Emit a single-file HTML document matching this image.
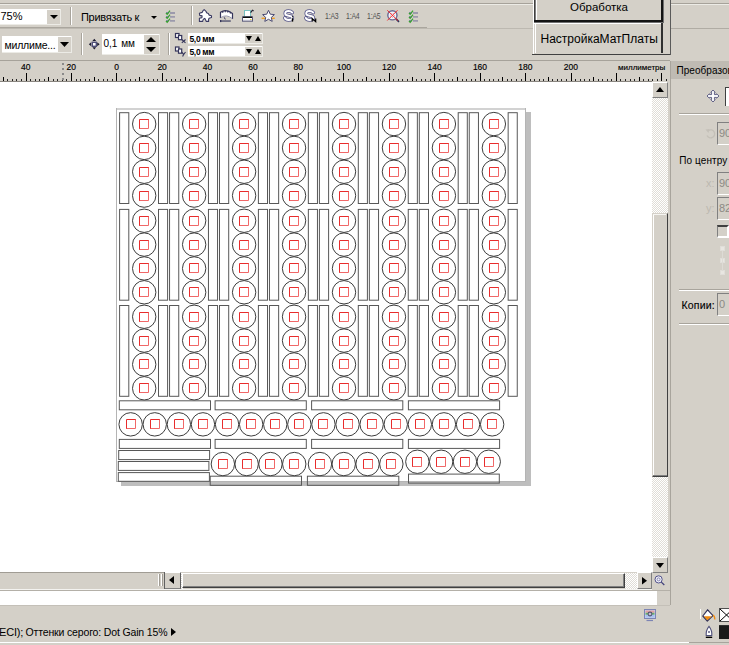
<!DOCTYPE html>
<html><head><meta charset="utf-8"><style>
*{box-sizing:border-box}
body{margin:0;width:729px;height:645px;overflow:hidden;background:#d4d0c8;position:relative;font-family:"Liberation Sans",sans-serif;color:#000}
.a{position:absolute}
.t{position:absolute;white-space:nowrap;line-height:1}
svg{position:absolute;overflow:visible}
</style></head><body>

<div class="a" style="left:0px;top:3px;width:729px;height:1px;background:#a6a29a"></div>
<div class="a" style="left:0px;top:4px;width:729px;height:1px;background:#ecebe6"></div>
<div class="a" style="left:0px;top:9px;width:61px;height:16px;background:#fff;border-bottom:1px solid #ecebe6;border-right:1px solid #ecebe6"></div>
<div class="a" style="left:47px;top:10px;width:13px;height:14px;background:#d4d0c8"></div>
<svg style="left:50px;top:15px" width="8" height="4"><path d="M0 0H8L4.0 4Z" fill="#000"/></svg>
<div class="t" style="left:0.5px;top:10.5px;font-size:11px;">75%</div>
<div class="a" style="left:70px;top:7px;width:1px;height:18px;background:#a8a49c"></div>
<div class="a" style="left:71px;top:7px;width:1px;height:18px;background:#fff"></div>
<div class="t" style="left:81px;top:12px;font-size:11px;letter-spacing:-0.3px">Привязать к</div>
<svg style="left:151px;top:16px" width="6" height="3"><path d="M0 0H6L3.0 3Z" fill="#000"/></svg>
<svg style="left:165px;top:10px" width="11" height="12"><path d="M5 3H10M5 6.9H10M5 10.8H10" stroke="#9c9aac" stroke-width="1.8"/><rect x="1" y="2" width="2.5" height="2" fill="#8a88b8"/><rect x="1" y="6" width="2.5" height="2" fill="#8a88b8"/><rect x="1" y="10" width="2.5" height="2" fill="#8a88b8"/><path d="M1 3L2.2 4.3 5 0.7M1 7L2.2 8.3 5 4.7M1 11L2.2 12.3 5 8.7" stroke="#38a030" stroke-width="1.3" fill="none"/></svg>
<div class="a" style="left:191px;top:6px;width:1px;height:19px;background:#a8a49c"></div>
<div class="a" style="left:192px;top:6px;width:1px;height:19px;background:#fff"></div>
<svg style="left:0px;top:0px" width="1" height="1"><path d="M204.2 9.6L206 11.3 206.6 12.7 208.3 13.5 209.1 15.1 211.5 15.7 211.5 17.5 209.1 18.3 208.6 19.3 208.6 21.4 206.3 21.4 204.9 18.6 204.4 18.4 203 19.8 202.7 21.4 199.4 21.4 199.4 18.3 201.9 17.6 202.1 15.9 199.7 15.4 199.4 13.2 202.1 12.4 203 10.7Z" fill="#fff" stroke="#3a3a62" stroke-width="1.1" stroke-linejoin="round"/></svg>
<svg style="left:0px;top:0px" width="1" height="1"><path d="M220.5 17.7V12.3Q226 8.6 232.5 13.4V18.9Q226.5 14 220.5 17.7Z" fill="#fff"/><path d="M220.5 18V12.3Q226 8.6 232.5 13.4V19" fill="none" stroke="#34345a" stroke-width="1.2" stroke-linejoin="round"/><path d="M220.8 17.6Q226.5 13.8 232.3 18.6" fill="none" stroke="#9a9ab0" stroke-width="1"/><path d="M222.8 11.2V13M225.3 10.3V12.3M227.8 10.6V12.6M230.3 11.7V13.6" stroke="#34345a" stroke-width="1"/><path d="M224.2 17.3L225.3 19.4" stroke="#34345a" stroke-width="1"/><rect x="220.2" y="20.2" width="10.6" height="1.7" fill="#6a6a80"/><rect x="220" y="20" width="1.3" height="2.1" fill="#34345a"/></svg>
<svg style="left:0px;top:0px" width="1" height="1"><rect x="244.5" y="10.5" width="6" height="6.2" fill="#fff" stroke="#78c0c0" stroke-width="1"/><path d="M250.6 12.6L252.5 10.2M252.2 10L253.6 11" stroke="#202030" stroke-width="1.1"/><rect x="242.5" y="16.8" width="10" height="4.4" fill="#fff" stroke="#5a5a7a" stroke-width="1"/><path d="M243 17.3H252" stroke="#000" stroke-width="1.3"/><path d="M243 20.3H252" stroke="#b8b8c8" stroke-width="1"/><rect x="250" y="19" width="1.5" height="1" fill="#e8d040"/></svg>
<svg style="left:0px;top:0px" width="1" height="1"><path d="M261.6 18.3H274.8" stroke="#f0a028" stroke-width="1.4"/><path d="M268.5 10.3L270.3 14.2 274.4 14.6 271.3 17.4 272.2 21.4 268.5 19.3 264.8 21.4 265.7 17.4 262.6 14.6 266.7 14.2Z" fill="#fafafa" stroke="#4a4a72" stroke-width="1" stroke-linejoin="round"/></svg>
<svg style="left:0px;top:0px" width="1" height="1"><path d="M292.3 12.6Q291.0 11 288.6 11Q285.2 11 285.2 13.4Q285.2 15.3 288.8 15.7Q292.4 16.1 292.4 18.1Q292.4 20 288.6 20Q285.6 20 284.8 17.9" fill="none" stroke="#56568a" stroke-width="3.5" stroke-linecap="round"/><path d="M292.3 12.6Q291.0 11 288.6 11Q285.2 11 285.2 13.4Q285.2 15.3 288.8 15.7Q292.4 16.1 292.4 18.1Q292.4 20 288.6 20Q285.6 20 284.8 17.9" fill="none" stroke="#fff" stroke-width="1.9" stroke-linecap="round"/><rect x="291.8" y="18.2" width="1.4" height="3.4" fill="#000"/><rect x="292" y="16.2" width="1.1" height="1.1" fill="#000"/></svg>
<svg style="left:0px;top:0px" width="1" height="1"><path d="M313.3 12.6Q312.0 11 309.6 11Q306.2 11 306.2 13.4Q306.2 15.3 309.8 15.7Q313.4 16.1 313.4 18.1Q313.4 20 309.6 20Q306.6 20 305.8 17.9" fill="none" stroke="#56568a" stroke-width="3.5" stroke-linecap="round"/><path d="M313.3 12.6Q312.0 11 309.6 11Q306.2 11 306.2 13.4Q306.2 15.3 309.8 15.7Q313.4 16.1 313.4 18.1Q313.4 20 309.6 20Q306.6 20 305.8 17.9" fill="none" stroke="#fff" stroke-width="1.9" stroke-linecap="round"/><path d="M312.2 21.6V18.5L315.7 21.6V18.5" stroke="#000" stroke-width="1.2" fill="none"/></svg>
<div class="t" style="left:324.5px;top:12.3px;font-size:8.6px;color:#505050;letter-spacing:-0.2px;transform:scaleX(0.8);transform-origin:0 0">1:A3</div>
<div class="t" style="left:345.5px;top:12.3px;font-size:8.6px;color:#505050;letter-spacing:-0.2px;transform:scaleX(0.8);transform-origin:0 0">1:A4</div>
<div class="t" style="left:366.5px;top:12.3px;font-size:8.6px;color:#505050;letter-spacing:-0.2px;transform:scaleX(0.8);transform-origin:0 0">1:A5</div>
<svg style="left:0px;top:0px" width="1" height="1"><circle cx="392.4" cy="15.3" r="4.6" fill="#f4f4fa" stroke="#6a6a92" stroke-width="1.4"/><circle cx="392.4" cy="15.3" r="2" fill="none" stroke="#9090a8" stroke-width="0.8" stroke-dasharray="1 1.2"/><path d="M396 18.9L399 21.9" stroke="#30305a" stroke-width="1.6"/><path d="M387.3 10.3L397.8 20.5M397.5 10.3L387.3 20.5" stroke="#ff1a1a" stroke-width="0.9"/></svg>
<svg style="left:408px;top:10px" width="11" height="12"><path d="M5 3H10M5 6.9H10M5 10.8H10" stroke="#9c9aac" stroke-width="1.8"/><rect x="1" y="2" width="2.5" height="2" fill="#8a88b8"/><rect x="1" y="6" width="2.5" height="2" fill="#8a88b8"/><rect x="1" y="10" width="2.5" height="2" fill="#8a88b8"/><path d="M1 3L2.2 4.3 5 0.7M1 7L2.2 8.3 5 4.7M1 11L2.2 12.3 5 8.7" stroke="#38a030" stroke-width="1.3" fill="none"/></svg>
<div class="a" style="left:0px;top:27px;width:427px;height:1px;background:#aaa69e"></div>
<div class="a" style="left:0px;top:28px;width:533px;height:1px;background:#bdb9b1"></div>
<div class="a" style="left:671px;top:3px;width:58px;height:1px;background:#a6a29a"></div>
<div class="a" style="left:671px;top:28px;width:58px;height:1px;background:#b0aca4"></div>
<div class="a" style="left:2px;top:36px;width:70px;height:17px;background:#fff;border-bottom:1px solid #ecebe6;border-right:1px solid #ecebe6"></div>
<div class="a" style="left:58px;top:37px;width:13px;height:15px;background:#d4d0c8"></div>
<svg style="left:60px;top:42px" width="9" height="5"><path d="M0 0H9L4.5 5Z" fill="#000"/></svg>
<div class="t" style="left:4.5px;top:39.8px;font-size:10.5px;letter-spacing:-0.2px">миллиме...</div>
<div class="a" style="left:81px;top:33px;width:1px;height:22px;background:#a8a49c"></div>
<div class="a" style="left:82px;top:33px;width:1px;height:22px;background:#fff"></div>
<svg style="left:0px;top:0px" width="1" height="1"><path d="M94.3 38.8L96.2 41H92.4Z M94.3 49.5L96.2 47.3H92.4Z M88.8 44.2L91.2 42.2V46.2Z M99.6 44.2L97.2 42.2V46.2Z" fill="#1a1a30"/><rect x="92.3" y="42.3" width="4" height="4" fill="#fff" stroke="#50507a" stroke-width="1.4"/></svg>
<div class="a" style="left:102px;top:34px;width:58px;height:21px;background:#fff;border-bottom:1px solid #ecebe6;border-right:1px solid #ecebe6"></div>
<div class="a" style="left:144px;top:35px;width:15px;height:19px;background:#d4d0c8"></div>
<svg style="left:146px;top:37px" width="10" height="5"><path d="M0 5H10L5.0 0Z" fill="#000"/></svg>
<svg style="left:146px;top:47px" width="10" height="5"><path d="M0 0H10L5.0 5Z" fill="#000"/></svg>
<div class="t" style="left:103.5px;top:38.5px;font-size:10px;letter-spacing:-0.1px;word-spacing:1.5px">0,1 мм</div>
<div class="a" style="left:168px;top:33px;width:1px;height:22px;background:#a8a49c"></div>
<div class="a" style="left:169px;top:33px;width:1px;height:22px;background:#fff"></div>
<svg style="left:0px;top:0px" width="1" height="1"><rect x="175.5" y="33.5" width="3.5" height="4" fill="#fff" stroke="#34345a" stroke-width="1.2"/><rect x="178.5" y="35.5" width="3.2" height="4.2" fill="#fff" stroke="#34345a" stroke-width="1.2"/><path d="M181.8 39.5L185.5 42.8M185.5 39.5L181.8 42.8" stroke="#34345a" stroke-width="1.1"/></svg>
<svg style="left:0px;top:0px" width="1" height="1"><rect x="175.5" y="47.0" width="3.5" height="4" fill="#fff" stroke="#34345a" stroke-width="1.2"/><rect x="178.5" y="49.0" width="3.2" height="4.2" fill="#fff" stroke="#34345a" stroke-width="1.2"/><path d="M181.8 52L183.6 54.5 185.5 52M183.6 54.5L182.6 56.5" stroke="#34345a" stroke-width="1.1" fill="none"/></svg>
<div class="a" style="left:188px;top:33px;width:75px;height:11px;background:#fff;border-bottom:1px solid #ecebe6;border-right:1px solid #ecebe6"></div>
<div class="a" style="left:245px;top:34px;width:17px;height:9px;background:#d4d0c8"></div>
<svg style="left:246px;top:36px" width="6" height="5"><path d="M0 0H6L3.0 5Z" fill="#000"/></svg>
<svg style="left:255px;top:36px" width="6" height="5"><path d="M0 5H6L3.0 0Z" fill="#000"/></svg>
<div class="t" style="left:189.4px;top:34.5px;font-size:8.5px;font-weight:bold;letter-spacing:-0.3px">5,0 мм</div>
<div class="a" style="left:188px;top:46px;width:75px;height:11px;background:#fff;border-bottom:1px solid #ecebe6;border-right:1px solid #ecebe6"></div>
<div class="a" style="left:245px;top:47px;width:17px;height:9px;background:#d4d0c8"></div>
<svg style="left:246px;top:49px" width="6" height="5"><path d="M0 0H6L3.0 5Z" fill="#000"/></svg>
<svg style="left:255px;top:49px" width="6" height="5"><path d="M0 5H6L3.0 0Z" fill="#000"/></svg>
<div class="t" style="left:189.4px;top:47.5px;font-size:8.5px;font-weight:bold;letter-spacing:-0.3px">5,0 мм</div>
<div class="a" style="left:0px;top:60px;width:670px;height:1px;background:#a6a29a"></div>
<div class="a" style="left:533px;top:0px;width:138px;height:55px;background:#d4d0c8"></div>
<div class="a" style="left:533px;top:0px;width:1px;height:54px;background:#fff"></div>
<div class="a" style="left:532px;top:54px;width:139px;height:1px;background:#404040"></div>
<div class="a" style="left:670px;top:0px;width:1px;height:55px;background:#5a5a5a"></div>
<div class="a" style="left:534px;top:0px;width:1px;height:20px;background:#404040"></div>
<div class="a" style="left:535px;top:0px;width:1px;height:20px;background:#808080"></div>
<div class="a" style="left:536px;top:0px;width:1px;height:20px;background:#fff"></div>
<div class="a" style="left:534px;top:20px;width:130px;height:2px;background:#141414"></div>
<div class="a" style="left:534px;top:22px;width:130px;height:1px;background:#707070"></div>
<div class="a" style="left:661px;top:0px;width:2px;height:22px;background:#141414"></div>
<div class="a" style="left:663px;top:0px;width:1px;height:22px;background:#707070"></div>
<div class="t" style="left:570px;top:1.5px;font-size:11.5px;">Обработка</div>
<div class="a" style="left:534px;top:23px;width:127px;height:1px;background:#fff"></div>
<div class="a" style="left:535px;top:23px;width:1px;height:30px;background:#fff"></div>
<div class="a" style="left:661px;top:23px;width:2px;height:30px;background:#303030"></div>
<div class="t" style="left:540.5px;top:32.5px;font-size:12px;">НастройкаМатПлаты</div>
<svg style="left:0px;top:0px" width="670" height="82" shape-rendering="crispEdges"><rect x="3" y="77" width="1" height="4" fill="#000"/><rect x="7" y="79" width="1" height="2" fill="#222"/><rect x="12" y="79" width="1" height="2" fill="#222"/><rect x="16" y="79" width="1" height="2" fill="#222"/><rect x="21" y="79" width="1" height="2" fill="#222"/><rect x="26" y="73" width="1" height="8" fill="#000"/><rect x="30" y="79" width="1" height="2" fill="#222"/><rect x="35" y="79" width="1" height="2" fill="#222"/><rect x="39" y="79" width="1" height="2" fill="#222"/><rect x="44" y="79" width="1" height="2" fill="#222"/><rect x="48" y="77" width="1" height="4" fill="#000"/><rect x="53" y="79" width="1" height="2" fill="#222"/><rect x="57" y="79" width="1" height="2" fill="#222"/><rect x="62" y="79" width="1" height="2" fill="#222"/><rect x="66" y="79" width="1" height="2" fill="#222"/><rect x="71" y="73" width="1" height="8" fill="#000"/><rect x="76" y="79" width="1" height="2" fill="#222"/><rect x="80" y="79" width="1" height="2" fill="#222"/><rect x="85" y="79" width="1" height="2" fill="#222"/><rect x="89" y="79" width="1" height="2" fill="#222"/><rect x="94" y="77" width="1" height="4" fill="#000"/><rect x="98" y="79" width="1" height="2" fill="#222"/><rect x="103" y="79" width="1" height="2" fill="#222"/><rect x="107" y="79" width="1" height="2" fill="#222"/><rect x="112" y="79" width="1" height="2" fill="#222"/><rect x="116" y="73" width="1" height="8" fill="#000"/><rect x="121" y="79" width="1" height="2" fill="#222"/><rect x="125" y="79" width="1" height="2" fill="#222"/><rect x="130" y="79" width="1" height="2" fill="#222"/><rect x="135" y="79" width="1" height="2" fill="#222"/><rect x="139" y="77" width="1" height="4" fill="#000"/><rect x="144" y="79" width="1" height="2" fill="#222"/><rect x="148" y="79" width="1" height="2" fill="#222"/><rect x="153" y="79" width="1" height="2" fill="#222"/><rect x="157" y="79" width="1" height="2" fill="#222"/><rect x="162" y="73" width="1" height="8" fill="#000"/><rect x="166" y="79" width="1" height="2" fill="#222"/><rect x="171" y="79" width="1" height="2" fill="#222"/><rect x="175" y="79" width="1" height="2" fill="#222"/><rect x="180" y="79" width="1" height="2" fill="#222"/><rect x="185" y="77" width="1" height="4" fill="#000"/><rect x="189" y="79" width="1" height="2" fill="#222"/><rect x="194" y="79" width="1" height="2" fill="#222"/><rect x="198" y="79" width="1" height="2" fill="#222"/><rect x="203" y="79" width="1" height="2" fill="#222"/><rect x="207" y="73" width="1" height="8" fill="#000"/><rect x="212" y="79" width="1" height="2" fill="#222"/><rect x="216" y="79" width="1" height="2" fill="#222"/><rect x="221" y="79" width="1" height="2" fill="#222"/><rect x="225" y="79" width="1" height="2" fill="#222"/><rect x="230" y="77" width="1" height="4" fill="#000"/><rect x="234" y="79" width="1" height="2" fill="#222"/><rect x="239" y="79" width="1" height="2" fill="#222"/><rect x="244" y="79" width="1" height="2" fill="#222"/><rect x="248" y="79" width="1" height="2" fill="#222"/><rect x="253" y="73" width="1" height="8" fill="#000"/><rect x="257" y="79" width="1" height="2" fill="#222"/><rect x="262" y="79" width="1" height="2" fill="#222"/><rect x="266" y="79" width="1" height="2" fill="#222"/><rect x="271" y="79" width="1" height="2" fill="#222"/><rect x="275" y="77" width="1" height="4" fill="#000"/><rect x="280" y="79" width="1" height="2" fill="#222"/><rect x="284" y="79" width="1" height="2" fill="#222"/><rect x="289" y="79" width="1" height="2" fill="#222"/><rect x="294" y="79" width="1" height="2" fill="#222"/><rect x="298" y="73" width="1" height="8" fill="#000"/><rect x="303" y="79" width="1" height="2" fill="#222"/><rect x="307" y="79" width="1" height="2" fill="#222"/><rect x="312" y="79" width="1" height="2" fill="#222"/><rect x="316" y="79" width="1" height="2" fill="#222"/><rect x="321" y="77" width="1" height="4" fill="#000"/><rect x="325" y="79" width="1" height="2" fill="#222"/><rect x="330" y="79" width="1" height="2" fill="#222"/><rect x="334" y="79" width="1" height="2" fill="#222"/><rect x="339" y="79" width="1" height="2" fill="#222"/><rect x="343" y="73" width="1" height="8" fill="#000"/><rect x="348" y="79" width="1" height="2" fill="#222"/><rect x="353" y="79" width="1" height="2" fill="#222"/><rect x="357" y="79" width="1" height="2" fill="#222"/><rect x="362" y="79" width="1" height="2" fill="#222"/><rect x="366" y="77" width="1" height="4" fill="#000"/><rect x="371" y="79" width="1" height="2" fill="#222"/><rect x="375" y="79" width="1" height="2" fill="#222"/><rect x="380" y="79" width="1" height="2" fill="#222"/><rect x="384" y="79" width="1" height="2" fill="#222"/><rect x="389" y="73" width="1" height="8" fill="#000"/><rect x="393" y="79" width="1" height="2" fill="#222"/><rect x="398" y="79" width="1" height="2" fill="#222"/><rect x="402" y="79" width="1" height="2" fill="#222"/><rect x="407" y="79" width="1" height="2" fill="#222"/><rect x="412" y="77" width="1" height="4" fill="#000"/><rect x="416" y="79" width="1" height="2" fill="#222"/><rect x="421" y="79" width="1" height="2" fill="#222"/><rect x="425" y="79" width="1" height="2" fill="#222"/><rect x="430" y="79" width="1" height="2" fill="#222"/><rect x="434" y="73" width="1" height="8" fill="#000"/><rect x="439" y="79" width="1" height="2" fill="#222"/><rect x="443" y="79" width="1" height="2" fill="#222"/><rect x="448" y="79" width="1" height="2" fill="#222"/><rect x="452" y="79" width="1" height="2" fill="#222"/><rect x="457" y="77" width="1" height="4" fill="#000"/><rect x="462" y="79" width="1" height="2" fill="#222"/><rect x="466" y="79" width="1" height="2" fill="#222"/><rect x="471" y="79" width="1" height="2" fill="#222"/><rect x="475" y="79" width="1" height="2" fill="#222"/><rect x="480" y="73" width="1" height="8" fill="#000"/><rect x="484" y="79" width="1" height="2" fill="#222"/><rect x="489" y="79" width="1" height="2" fill="#222"/><rect x="493" y="79" width="1" height="2" fill="#222"/><rect x="498" y="79" width="1" height="2" fill="#222"/><rect x="502" y="77" width="1" height="4" fill="#000"/><rect x="507" y="79" width="1" height="2" fill="#222"/><rect x="511" y="79" width="1" height="2" fill="#222"/><rect x="516" y="79" width="1" height="2" fill="#222"/><rect x="521" y="79" width="1" height="2" fill="#222"/><rect x="525" y="73" width="1" height="8" fill="#000"/><rect x="530" y="79" width="1" height="2" fill="#222"/><rect x="534" y="79" width="1" height="2" fill="#222"/><rect x="539" y="79" width="1" height="2" fill="#222"/><rect x="543" y="79" width="1" height="2" fill="#222"/><rect x="548" y="77" width="1" height="4" fill="#000"/><rect x="552" y="79" width="1" height="2" fill="#222"/><rect x="557" y="79" width="1" height="2" fill="#222"/><rect x="561" y="79" width="1" height="2" fill="#222"/><rect x="566" y="79" width="1" height="2" fill="#222"/><rect x="571" y="73" width="1" height="8" fill="#000"/><rect x="575" y="79" width="1" height="2" fill="#222"/><rect x="580" y="79" width="1" height="2" fill="#222"/><rect x="584" y="79" width="1" height="2" fill="#222"/><rect x="589" y="79" width="1" height="2" fill="#222"/><rect x="593" y="77" width="1" height="4" fill="#000"/><rect x="598" y="79" width="1" height="2" fill="#222"/><rect x="602" y="79" width="1" height="2" fill="#222"/><rect x="607" y="79" width="1" height="2" fill="#222"/><rect x="611" y="79" width="1" height="2" fill="#222"/><rect x="616" y="73" width="1" height="8" fill="#000"/><rect x="620" y="79" width="1" height="2" fill="#222"/><rect x="625" y="79" width="1" height="2" fill="#222"/><rect x="630" y="79" width="1" height="2" fill="#222"/><rect x="634" y="79" width="1" height="2" fill="#222"/><rect x="639" y="77" width="1" height="4" fill="#000"/><rect x="643" y="79" width="1" height="2" fill="#222"/><rect x="648" y="79" width="1" height="2" fill="#222"/><rect x="652" y="79" width="1" height="2" fill="#222"/><rect x="657" y="79" width="1" height="2" fill="#222"/><rect x="661" y="73" width="1" height="8" fill="#000"/><rect x="666" y="79" width="1" height="2" fill="#222"/><rect x="62" y="63" width="2" height="2" fill="#8a8a8a"/><rect x="62" y="68" width="2" height="2" fill="#8a8a8a"/><rect x="62" y="73" width="2" height="2" fill="#8a8a8a"/><rect x="62" y="78" width="2" height="2" fill="#8a8a8a"/></svg>
<div class="t" style="left:21.1px;top:63px;font-size:8.5px;color:#000;-webkit-text-stroke:0.15px #000">40</div>
<div class="t" style="left:66.6px;top:63px;font-size:8.5px;color:#000;-webkit-text-stroke:0.15px #000">20</div>
<div class="t" style="left:114.3px;top:63px;font-size:8.5px;color:#000;-webkit-text-stroke:0.15px #000">0</div>
<div class="t" style="left:157.4px;top:63px;font-size:8.5px;color:#000;-webkit-text-stroke:0.15px #000">20</div>
<div class="t" style="left:202.8px;top:63px;font-size:8.5px;color:#000;-webkit-text-stroke:0.15px #000">40</div>
<div class="t" style="left:248.2px;top:63px;font-size:8.5px;color:#000;-webkit-text-stroke:0.15px #000">60</div>
<div class="t" style="left:293.6px;top:63px;font-size:8.5px;color:#000;-webkit-text-stroke:0.15px #000">80</div>
<div class="t" style="left:336.7px;top:63px;font-size:8.5px;color:#000;-webkit-text-stroke:0.15px #000">100</div>
<div class="t" style="left:382.1px;top:63px;font-size:8.5px;color:#000;-webkit-text-stroke:0.15px #000">120</div>
<div class="t" style="left:427.5px;top:63px;font-size:8.5px;color:#000;-webkit-text-stroke:0.15px #000">140</div>
<div class="t" style="left:472.9px;top:63px;font-size:8.5px;color:#000;-webkit-text-stroke:0.15px #000">160</div>
<div class="t" style="left:518.3px;top:63px;font-size:8.5px;color:#000;-webkit-text-stroke:0.15px #000">180</div>
<div class="t" style="left:563.7px;top:63px;font-size:8.5px;color:#000;-webkit-text-stroke:0.15px #000">200</div>
<div class="t" style="left:618px;top:63.5px;font-size:8px;color:#000;-webkit-text-stroke:0.15px #000">миллиметры</div>
<div class="a" style="left:0px;top:81px;width:652px;height:1px;background:#8a8680"></div>
<div class="a" style="left:0px;top:82px;width:652px;height:490px;background:#fff"></div>
<svg style="left:0px;top:0px" width="652" height="572"><rect x="526" y="112" width="5" height="374" fill="#bebebe"/><rect x="121" y="482" width="410" height="4" fill="#bebebe"/><rect x="116" y="108" width="410" height="2" fill="#d2d2d2"/><rect x="116" y="108" width="1" height="374" fill="#b4b4b4"/><rect x="525" y="108" width="1" height="374" fill="#b4b4b4"/><rect x="116" y="481" width="410" height="1" fill="#b4b4b4"/><rect x="119.60" y="112.70" width="9.20" height="90.80" stroke="#585858" stroke-width="1" fill="none"/><rect x="158.50" y="112.70" width="9.10" height="90.80" stroke="#585858" stroke-width="1" fill="none"/><circle cx="144.20" cy="124.05" r="11.7" stroke="#3c3c3c" stroke-width="1.0" fill="none"/><path d="M139.5 129.0V119.5H149.0" stroke="#e82c2c" stroke-width="1" fill="none"/><path d="M148.5 119.5V128.5H139.5" stroke="#f06868" stroke-width="1" fill="none"/><circle cx="144.20" cy="147.90" r="11.7" stroke="#3c3c3c" stroke-width="1.0" fill="none"/><path d="M139.5 153.0V143.5H149.0" stroke="#e82c2c" stroke-width="1" fill="none"/><path d="M148.5 143.5V152.5H139.5" stroke="#f06868" stroke-width="1" fill="none"/><circle cx="144.20" cy="171.75" r="11.7" stroke="#3c3c3c" stroke-width="1.0" fill="none"/><path d="M139.5 177.0V167.5H149.0" stroke="#e82c2c" stroke-width="1" fill="none"/><path d="M148.5 167.5V176.5H139.5" stroke="#f06868" stroke-width="1" fill="none"/><circle cx="144.20" cy="195.60" r="11.7" stroke="#3c3c3c" stroke-width="1.0" fill="none"/><path d="M139.5 201.0V191.5H149.0" stroke="#e82c2c" stroke-width="1" fill="none"/><path d="M148.5 191.5V200.5H139.5" stroke="#f06868" stroke-width="1" fill="none"/><rect x="169.55" y="112.70" width="9.20" height="90.80" stroke="#585858" stroke-width="1" fill="none"/><rect x="208.45" y="112.70" width="9.10" height="90.80" stroke="#585858" stroke-width="1" fill="none"/><circle cx="194.15" cy="124.05" r="11.7" stroke="#3c3c3c" stroke-width="1.0" fill="none"/><path d="M189.5 129.0V119.5H199.0" stroke="#e82c2c" stroke-width="1" fill="none"/><path d="M198.5 119.5V128.5H189.5" stroke="#f06868" stroke-width="1" fill="none"/><circle cx="194.15" cy="147.90" r="11.7" stroke="#3c3c3c" stroke-width="1.0" fill="none"/><path d="M189.5 153.0V143.5H199.0" stroke="#e82c2c" stroke-width="1" fill="none"/><path d="M198.5 143.5V152.5H189.5" stroke="#f06868" stroke-width="1" fill="none"/><circle cx="194.15" cy="171.75" r="11.7" stroke="#3c3c3c" stroke-width="1.0" fill="none"/><path d="M189.5 177.0V167.5H199.0" stroke="#e82c2c" stroke-width="1" fill="none"/><path d="M198.5 167.5V176.5H189.5" stroke="#f06868" stroke-width="1" fill="none"/><circle cx="194.15" cy="195.60" r="11.7" stroke="#3c3c3c" stroke-width="1.0" fill="none"/><path d="M189.5 201.0V191.5H199.0" stroke="#e82c2c" stroke-width="1" fill="none"/><path d="M198.5 191.5V200.5H189.5" stroke="#f06868" stroke-width="1" fill="none"/><rect x="219.50" y="112.70" width="9.20" height="90.80" stroke="#585858" stroke-width="1" fill="none"/><rect x="258.40" y="112.70" width="9.10" height="90.80" stroke="#585858" stroke-width="1" fill="none"/><circle cx="244.10" cy="124.05" r="11.7" stroke="#3c3c3c" stroke-width="1.0" fill="none"/><path d="M239.5 129.0V119.5H249.0" stroke="#e82c2c" stroke-width="1" fill="none"/><path d="M248.5 119.5V128.5H239.5" stroke="#f06868" stroke-width="1" fill="none"/><circle cx="244.10" cy="147.90" r="11.7" stroke="#3c3c3c" stroke-width="1.0" fill="none"/><path d="M239.5 153.0V143.5H249.0" stroke="#e82c2c" stroke-width="1" fill="none"/><path d="M248.5 143.5V152.5H239.5" stroke="#f06868" stroke-width="1" fill="none"/><circle cx="244.10" cy="171.75" r="11.7" stroke="#3c3c3c" stroke-width="1.0" fill="none"/><path d="M239.5 177.0V167.5H249.0" stroke="#e82c2c" stroke-width="1" fill="none"/><path d="M248.5 167.5V176.5H239.5" stroke="#f06868" stroke-width="1" fill="none"/><circle cx="244.10" cy="195.60" r="11.7" stroke="#3c3c3c" stroke-width="1.0" fill="none"/><path d="M239.5 201.0V191.5H249.0" stroke="#e82c2c" stroke-width="1" fill="none"/><path d="M248.5 191.5V200.5H239.5" stroke="#f06868" stroke-width="1" fill="none"/><rect x="269.45" y="112.70" width="9.20" height="90.80" stroke="#585858" stroke-width="1" fill="none"/><rect x="308.35" y="112.70" width="9.10" height="90.80" stroke="#585858" stroke-width="1" fill="none"/><circle cx="294.05" cy="124.05" r="11.7" stroke="#3c3c3c" stroke-width="1.0" fill="none"/><path d="M289.5 129.0V119.5H299.0" stroke="#e82c2c" stroke-width="1" fill="none"/><path d="M298.5 119.5V128.5H289.5" stroke="#f06868" stroke-width="1" fill="none"/><circle cx="294.05" cy="147.90" r="11.7" stroke="#3c3c3c" stroke-width="1.0" fill="none"/><path d="M289.5 153.0V143.5H299.0" stroke="#e82c2c" stroke-width="1" fill="none"/><path d="M298.5 143.5V152.5H289.5" stroke="#f06868" stroke-width="1" fill="none"/><circle cx="294.05" cy="171.75" r="11.7" stroke="#3c3c3c" stroke-width="1.0" fill="none"/><path d="M289.5 177.0V167.5H299.0" stroke="#e82c2c" stroke-width="1" fill="none"/><path d="M298.5 167.5V176.5H289.5" stroke="#f06868" stroke-width="1" fill="none"/><circle cx="294.05" cy="195.60" r="11.7" stroke="#3c3c3c" stroke-width="1.0" fill="none"/><path d="M289.5 201.0V191.5H299.0" stroke="#e82c2c" stroke-width="1" fill="none"/><path d="M298.5 191.5V200.5H289.5" stroke="#f06868" stroke-width="1" fill="none"/><rect x="319.40" y="112.70" width="9.20" height="90.80" stroke="#585858" stroke-width="1" fill="none"/><rect x="358.30" y="112.70" width="9.10" height="90.80" stroke="#585858" stroke-width="1" fill="none"/><circle cx="344.00" cy="124.05" r="11.7" stroke="#3c3c3c" stroke-width="1.0" fill="none"/><path d="M339.5 129.0V119.5H349.0" stroke="#e82c2c" stroke-width="1" fill="none"/><path d="M348.5 119.5V128.5H339.5" stroke="#f06868" stroke-width="1" fill="none"/><circle cx="344.00" cy="147.90" r="11.7" stroke="#3c3c3c" stroke-width="1.0" fill="none"/><path d="M339.5 153.0V143.5H349.0" stroke="#e82c2c" stroke-width="1" fill="none"/><path d="M348.5 143.5V152.5H339.5" stroke="#f06868" stroke-width="1" fill="none"/><circle cx="344.00" cy="171.75" r="11.7" stroke="#3c3c3c" stroke-width="1.0" fill="none"/><path d="M339.5 177.0V167.5H349.0" stroke="#e82c2c" stroke-width="1" fill="none"/><path d="M348.5 167.5V176.5H339.5" stroke="#f06868" stroke-width="1" fill="none"/><circle cx="344.00" cy="195.60" r="11.7" stroke="#3c3c3c" stroke-width="1.0" fill="none"/><path d="M339.5 201.0V191.5H349.0" stroke="#e82c2c" stroke-width="1" fill="none"/><path d="M348.5 191.5V200.5H339.5" stroke="#f06868" stroke-width="1" fill="none"/><rect x="369.35" y="112.70" width="9.20" height="90.80" stroke="#585858" stroke-width="1" fill="none"/><rect x="408.25" y="112.70" width="9.10" height="90.80" stroke="#585858" stroke-width="1" fill="none"/><circle cx="393.95" cy="124.05" r="11.7" stroke="#3c3c3c" stroke-width="1.0" fill="none"/><path d="M389.5 129.0V119.5H399.0" stroke="#e82c2c" stroke-width="1" fill="none"/><path d="M398.5 119.5V128.5H389.5" stroke="#f06868" stroke-width="1" fill="none"/><circle cx="393.95" cy="147.90" r="11.7" stroke="#3c3c3c" stroke-width="1.0" fill="none"/><path d="M389.5 153.0V143.5H399.0" stroke="#e82c2c" stroke-width="1" fill="none"/><path d="M398.5 143.5V152.5H389.5" stroke="#f06868" stroke-width="1" fill="none"/><circle cx="393.95" cy="171.75" r="11.7" stroke="#3c3c3c" stroke-width="1.0" fill="none"/><path d="M389.5 177.0V167.5H399.0" stroke="#e82c2c" stroke-width="1" fill="none"/><path d="M398.5 167.5V176.5H389.5" stroke="#f06868" stroke-width="1" fill="none"/><circle cx="393.95" cy="195.60" r="11.7" stroke="#3c3c3c" stroke-width="1.0" fill="none"/><path d="M389.5 201.0V191.5H399.0" stroke="#e82c2c" stroke-width="1" fill="none"/><path d="M398.5 191.5V200.5H389.5" stroke="#f06868" stroke-width="1" fill="none"/><rect x="419.30" y="112.70" width="9.20" height="90.80" stroke="#585858" stroke-width="1" fill="none"/><rect x="458.20" y="112.70" width="9.10" height="90.80" stroke="#585858" stroke-width="1" fill="none"/><circle cx="443.90" cy="124.05" r="11.7" stroke="#3c3c3c" stroke-width="1.0" fill="none"/><path d="M439.5 129.0V119.5H449.0" stroke="#e82c2c" stroke-width="1" fill="none"/><path d="M448.5 119.5V128.5H439.5" stroke="#f06868" stroke-width="1" fill="none"/><circle cx="443.90" cy="147.90" r="11.7" stroke="#3c3c3c" stroke-width="1.0" fill="none"/><path d="M439.5 153.0V143.5H449.0" stroke="#e82c2c" stroke-width="1" fill="none"/><path d="M448.5 143.5V152.5H439.5" stroke="#f06868" stroke-width="1" fill="none"/><circle cx="443.90" cy="171.75" r="11.7" stroke="#3c3c3c" stroke-width="1.0" fill="none"/><path d="M439.5 177.0V167.5H449.0" stroke="#e82c2c" stroke-width="1" fill="none"/><path d="M448.5 167.5V176.5H439.5" stroke="#f06868" stroke-width="1" fill="none"/><circle cx="443.90" cy="195.60" r="11.7" stroke="#3c3c3c" stroke-width="1.0" fill="none"/><path d="M439.5 201.0V191.5H449.0" stroke="#e82c2c" stroke-width="1" fill="none"/><path d="M448.5 191.5V200.5H439.5" stroke="#f06868" stroke-width="1" fill="none"/><rect x="469.25" y="112.70" width="9.20" height="90.80" stroke="#585858" stroke-width="1" fill="none"/><rect x="508.15" y="112.70" width="9.10" height="90.80" stroke="#585858" stroke-width="1" fill="none"/><circle cx="493.85" cy="124.05" r="11.7" stroke="#3c3c3c" stroke-width="1.0" fill="none"/><path d="M489.5 129.0V119.5H499.0" stroke="#e82c2c" stroke-width="1" fill="none"/><path d="M498.5 119.5V128.5H489.5" stroke="#f06868" stroke-width="1" fill="none"/><circle cx="493.85" cy="147.90" r="11.7" stroke="#3c3c3c" stroke-width="1.0" fill="none"/><path d="M489.5 153.0V143.5H499.0" stroke="#e82c2c" stroke-width="1" fill="none"/><path d="M498.5 143.5V152.5H489.5" stroke="#f06868" stroke-width="1" fill="none"/><circle cx="493.85" cy="171.75" r="11.7" stroke="#3c3c3c" stroke-width="1.0" fill="none"/><path d="M489.5 177.0V167.5H499.0" stroke="#e82c2c" stroke-width="1" fill="none"/><path d="M498.5 167.5V176.5H489.5" stroke="#f06868" stroke-width="1" fill="none"/><circle cx="493.85" cy="195.60" r="11.7" stroke="#3c3c3c" stroke-width="1.0" fill="none"/><path d="M489.5 201.0V191.5H499.0" stroke="#e82c2c" stroke-width="1" fill="none"/><path d="M498.5 191.5V200.5H489.5" stroke="#f06868" stroke-width="1" fill="none"/><rect x="119.60" y="209.40" width="9.20" height="90.80" stroke="#585858" stroke-width="1" fill="none"/><rect x="158.50" y="209.40" width="9.10" height="90.80" stroke="#585858" stroke-width="1" fill="none"/><circle cx="144.20" cy="220.75" r="11.7" stroke="#3c3c3c" stroke-width="1.0" fill="none"/><path d="M139.5 226.0V216.5H149.0" stroke="#e82c2c" stroke-width="1" fill="none"/><path d="M148.5 216.5V225.5H139.5" stroke="#f06868" stroke-width="1" fill="none"/><circle cx="144.20" cy="244.60" r="11.7" stroke="#3c3c3c" stroke-width="1.0" fill="none"/><path d="M139.5 250.0V240.5H149.0" stroke="#e82c2c" stroke-width="1" fill="none"/><path d="M148.5 240.5V249.5H139.5" stroke="#f06868" stroke-width="1" fill="none"/><circle cx="144.20" cy="268.45" r="11.7" stroke="#3c3c3c" stroke-width="1.0" fill="none"/><path d="M139.5 273.0V263.5H149.0" stroke="#e82c2c" stroke-width="1" fill="none"/><path d="M148.5 263.5V272.5H139.5" stroke="#f06868" stroke-width="1" fill="none"/><circle cx="144.20" cy="292.30" r="11.7" stroke="#3c3c3c" stroke-width="1.0" fill="none"/><path d="M139.5 297.0V287.5H149.0" stroke="#e82c2c" stroke-width="1" fill="none"/><path d="M148.5 287.5V296.5H139.5" stroke="#f06868" stroke-width="1" fill="none"/><rect x="169.55" y="209.40" width="9.20" height="90.80" stroke="#585858" stroke-width="1" fill="none"/><rect x="208.45" y="209.40" width="9.10" height="90.80" stroke="#585858" stroke-width="1" fill="none"/><circle cx="194.15" cy="220.75" r="11.7" stroke="#3c3c3c" stroke-width="1.0" fill="none"/><path d="M189.5 226.0V216.5H199.0" stroke="#e82c2c" stroke-width="1" fill="none"/><path d="M198.5 216.5V225.5H189.5" stroke="#f06868" stroke-width="1" fill="none"/><circle cx="194.15" cy="244.60" r="11.7" stroke="#3c3c3c" stroke-width="1.0" fill="none"/><path d="M189.5 250.0V240.5H199.0" stroke="#e82c2c" stroke-width="1" fill="none"/><path d="M198.5 240.5V249.5H189.5" stroke="#f06868" stroke-width="1" fill="none"/><circle cx="194.15" cy="268.45" r="11.7" stroke="#3c3c3c" stroke-width="1.0" fill="none"/><path d="M189.5 273.0V263.5H199.0" stroke="#e82c2c" stroke-width="1" fill="none"/><path d="M198.5 263.5V272.5H189.5" stroke="#f06868" stroke-width="1" fill="none"/><circle cx="194.15" cy="292.30" r="11.7" stroke="#3c3c3c" stroke-width="1.0" fill="none"/><path d="M189.5 297.0V287.5H199.0" stroke="#e82c2c" stroke-width="1" fill="none"/><path d="M198.5 287.5V296.5H189.5" stroke="#f06868" stroke-width="1" fill="none"/><rect x="219.50" y="209.40" width="9.20" height="90.80" stroke="#585858" stroke-width="1" fill="none"/><rect x="258.40" y="209.40" width="9.10" height="90.80" stroke="#585858" stroke-width="1" fill="none"/><circle cx="244.10" cy="220.75" r="11.7" stroke="#3c3c3c" stroke-width="1.0" fill="none"/><path d="M239.5 226.0V216.5H249.0" stroke="#e82c2c" stroke-width="1" fill="none"/><path d="M248.5 216.5V225.5H239.5" stroke="#f06868" stroke-width="1" fill="none"/><circle cx="244.10" cy="244.60" r="11.7" stroke="#3c3c3c" stroke-width="1.0" fill="none"/><path d="M239.5 250.0V240.5H249.0" stroke="#e82c2c" stroke-width="1" fill="none"/><path d="M248.5 240.5V249.5H239.5" stroke="#f06868" stroke-width="1" fill="none"/><circle cx="244.10" cy="268.45" r="11.7" stroke="#3c3c3c" stroke-width="1.0" fill="none"/><path d="M239.5 273.0V263.5H249.0" stroke="#e82c2c" stroke-width="1" fill="none"/><path d="M248.5 263.5V272.5H239.5" stroke="#f06868" stroke-width="1" fill="none"/><circle cx="244.10" cy="292.30" r="11.7" stroke="#3c3c3c" stroke-width="1.0" fill="none"/><path d="M239.5 297.0V287.5H249.0" stroke="#e82c2c" stroke-width="1" fill="none"/><path d="M248.5 287.5V296.5H239.5" stroke="#f06868" stroke-width="1" fill="none"/><rect x="269.45" y="209.40" width="9.20" height="90.80" stroke="#585858" stroke-width="1" fill="none"/><rect x="308.35" y="209.40" width="9.10" height="90.80" stroke="#585858" stroke-width="1" fill="none"/><circle cx="294.05" cy="220.75" r="11.7" stroke="#3c3c3c" stroke-width="1.0" fill="none"/><path d="M289.5 226.0V216.5H299.0" stroke="#e82c2c" stroke-width="1" fill="none"/><path d="M298.5 216.5V225.5H289.5" stroke="#f06868" stroke-width="1" fill="none"/><circle cx="294.05" cy="244.60" r="11.7" stroke="#3c3c3c" stroke-width="1.0" fill="none"/><path d="M289.5 250.0V240.5H299.0" stroke="#e82c2c" stroke-width="1" fill="none"/><path d="M298.5 240.5V249.5H289.5" stroke="#f06868" stroke-width="1" fill="none"/><circle cx="294.05" cy="268.45" r="11.7" stroke="#3c3c3c" stroke-width="1.0" fill="none"/><path d="M289.5 273.0V263.5H299.0" stroke="#e82c2c" stroke-width="1" fill="none"/><path d="M298.5 263.5V272.5H289.5" stroke="#f06868" stroke-width="1" fill="none"/><circle cx="294.05" cy="292.30" r="11.7" stroke="#3c3c3c" stroke-width="1.0" fill="none"/><path d="M289.5 297.0V287.5H299.0" stroke="#e82c2c" stroke-width="1" fill="none"/><path d="M298.5 287.5V296.5H289.5" stroke="#f06868" stroke-width="1" fill="none"/><rect x="319.40" y="209.40" width="9.20" height="90.80" stroke="#585858" stroke-width="1" fill="none"/><rect x="358.30" y="209.40" width="9.10" height="90.80" stroke="#585858" stroke-width="1" fill="none"/><circle cx="344.00" cy="220.75" r="11.7" stroke="#3c3c3c" stroke-width="1.0" fill="none"/><path d="M339.5 226.0V216.5H349.0" stroke="#e82c2c" stroke-width="1" fill="none"/><path d="M348.5 216.5V225.5H339.5" stroke="#f06868" stroke-width="1" fill="none"/><circle cx="344.00" cy="244.60" r="11.7" stroke="#3c3c3c" stroke-width="1.0" fill="none"/><path d="M339.5 250.0V240.5H349.0" stroke="#e82c2c" stroke-width="1" fill="none"/><path d="M348.5 240.5V249.5H339.5" stroke="#f06868" stroke-width="1" fill="none"/><circle cx="344.00" cy="268.45" r="11.7" stroke="#3c3c3c" stroke-width="1.0" fill="none"/><path d="M339.5 273.0V263.5H349.0" stroke="#e82c2c" stroke-width="1" fill="none"/><path d="M348.5 263.5V272.5H339.5" stroke="#f06868" stroke-width="1" fill="none"/><circle cx="344.00" cy="292.30" r="11.7" stroke="#3c3c3c" stroke-width="1.0" fill="none"/><path d="M339.5 297.0V287.5H349.0" stroke="#e82c2c" stroke-width="1" fill="none"/><path d="M348.5 287.5V296.5H339.5" stroke="#f06868" stroke-width="1" fill="none"/><rect x="369.35" y="209.40" width="9.20" height="90.80" stroke="#585858" stroke-width="1" fill="none"/><rect x="408.25" y="209.40" width="9.10" height="90.80" stroke="#585858" stroke-width="1" fill="none"/><circle cx="393.95" cy="220.75" r="11.7" stroke="#3c3c3c" stroke-width="1.0" fill="none"/><path d="M389.5 226.0V216.5H399.0" stroke="#e82c2c" stroke-width="1" fill="none"/><path d="M398.5 216.5V225.5H389.5" stroke="#f06868" stroke-width="1" fill="none"/><circle cx="393.95" cy="244.60" r="11.7" stroke="#3c3c3c" stroke-width="1.0" fill="none"/><path d="M389.5 250.0V240.5H399.0" stroke="#e82c2c" stroke-width="1" fill="none"/><path d="M398.5 240.5V249.5H389.5" stroke="#f06868" stroke-width="1" fill="none"/><circle cx="393.95" cy="268.45" r="11.7" stroke="#3c3c3c" stroke-width="1.0" fill="none"/><path d="M389.5 273.0V263.5H399.0" stroke="#e82c2c" stroke-width="1" fill="none"/><path d="M398.5 263.5V272.5H389.5" stroke="#f06868" stroke-width="1" fill="none"/><circle cx="393.95" cy="292.30" r="11.7" stroke="#3c3c3c" stroke-width="1.0" fill="none"/><path d="M389.5 297.0V287.5H399.0" stroke="#e82c2c" stroke-width="1" fill="none"/><path d="M398.5 287.5V296.5H389.5" stroke="#f06868" stroke-width="1" fill="none"/><rect x="419.30" y="209.40" width="9.20" height="90.80" stroke="#585858" stroke-width="1" fill="none"/><rect x="458.20" y="209.40" width="9.10" height="90.80" stroke="#585858" stroke-width="1" fill="none"/><circle cx="443.90" cy="220.75" r="11.7" stroke="#3c3c3c" stroke-width="1.0" fill="none"/><path d="M439.5 226.0V216.5H449.0" stroke="#e82c2c" stroke-width="1" fill="none"/><path d="M448.5 216.5V225.5H439.5" stroke="#f06868" stroke-width="1" fill="none"/><circle cx="443.90" cy="244.60" r="11.7" stroke="#3c3c3c" stroke-width="1.0" fill="none"/><path d="M439.5 250.0V240.5H449.0" stroke="#e82c2c" stroke-width="1" fill="none"/><path d="M448.5 240.5V249.5H439.5" stroke="#f06868" stroke-width="1" fill="none"/><circle cx="443.90" cy="268.45" r="11.7" stroke="#3c3c3c" stroke-width="1.0" fill="none"/><path d="M439.5 273.0V263.5H449.0" stroke="#e82c2c" stroke-width="1" fill="none"/><path d="M448.5 263.5V272.5H439.5" stroke="#f06868" stroke-width="1" fill="none"/><circle cx="443.90" cy="292.30" r="11.7" stroke="#3c3c3c" stroke-width="1.0" fill="none"/><path d="M439.5 297.0V287.5H449.0" stroke="#e82c2c" stroke-width="1" fill="none"/><path d="M448.5 287.5V296.5H439.5" stroke="#f06868" stroke-width="1" fill="none"/><rect x="469.25" y="209.40" width="9.20" height="90.80" stroke="#585858" stroke-width="1" fill="none"/><rect x="508.15" y="209.40" width="9.10" height="90.80" stroke="#585858" stroke-width="1" fill="none"/><circle cx="493.85" cy="220.75" r="11.7" stroke="#3c3c3c" stroke-width="1.0" fill="none"/><path d="M489.5 226.0V216.5H499.0" stroke="#e82c2c" stroke-width="1" fill="none"/><path d="M498.5 216.5V225.5H489.5" stroke="#f06868" stroke-width="1" fill="none"/><circle cx="493.85" cy="244.60" r="11.7" stroke="#3c3c3c" stroke-width="1.0" fill="none"/><path d="M489.5 250.0V240.5H499.0" stroke="#e82c2c" stroke-width="1" fill="none"/><path d="M498.5 240.5V249.5H489.5" stroke="#f06868" stroke-width="1" fill="none"/><circle cx="493.85" cy="268.45" r="11.7" stroke="#3c3c3c" stroke-width="1.0" fill="none"/><path d="M489.5 273.0V263.5H499.0" stroke="#e82c2c" stroke-width="1" fill="none"/><path d="M498.5 263.5V272.5H489.5" stroke="#f06868" stroke-width="1" fill="none"/><circle cx="493.85" cy="292.30" r="11.7" stroke="#3c3c3c" stroke-width="1.0" fill="none"/><path d="M489.5 297.0V287.5H499.0" stroke="#e82c2c" stroke-width="1" fill="none"/><path d="M498.5 287.5V296.5H489.5" stroke="#f06868" stroke-width="1" fill="none"/><rect x="119.60" y="305.50" width="9.20" height="90.80" stroke="#585858" stroke-width="1" fill="none"/><rect x="158.50" y="305.50" width="9.10" height="90.80" stroke="#585858" stroke-width="1" fill="none"/><circle cx="144.20" cy="316.75" r="11.7" stroke="#3c3c3c" stroke-width="1.0" fill="none"/><path d="M139.5 322.0V312.5H149.0" stroke="#e82c2c" stroke-width="1" fill="none"/><path d="M148.5 312.5V321.5H139.5" stroke="#f06868" stroke-width="1" fill="none"/><circle cx="144.20" cy="340.60" r="11.7" stroke="#3c3c3c" stroke-width="1.0" fill="none"/><path d="M139.5 346.0V336.5H149.0" stroke="#e82c2c" stroke-width="1" fill="none"/><path d="M148.5 336.5V345.5H139.5" stroke="#f06868" stroke-width="1" fill="none"/><circle cx="144.20" cy="364.45" r="11.7" stroke="#3c3c3c" stroke-width="1.0" fill="none"/><path d="M139.5 369.0V359.5H149.0" stroke="#e82c2c" stroke-width="1" fill="none"/><path d="M148.5 359.5V368.5H139.5" stroke="#f06868" stroke-width="1" fill="none"/><circle cx="144.20" cy="388.30" r="11.7" stroke="#3c3c3c" stroke-width="1.0" fill="none"/><path d="M139.5 393.0V383.5H149.0" stroke="#e82c2c" stroke-width="1" fill="none"/><path d="M148.5 383.5V392.5H139.5" stroke="#f06868" stroke-width="1" fill="none"/><rect x="169.55" y="305.50" width="9.20" height="90.80" stroke="#585858" stroke-width="1" fill="none"/><rect x="208.45" y="305.50" width="9.10" height="90.80" stroke="#585858" stroke-width="1" fill="none"/><circle cx="194.15" cy="316.75" r="11.7" stroke="#3c3c3c" stroke-width="1.0" fill="none"/><path d="M189.5 322.0V312.5H199.0" stroke="#e82c2c" stroke-width="1" fill="none"/><path d="M198.5 312.5V321.5H189.5" stroke="#f06868" stroke-width="1" fill="none"/><circle cx="194.15" cy="340.60" r="11.7" stroke="#3c3c3c" stroke-width="1.0" fill="none"/><path d="M189.5 346.0V336.5H199.0" stroke="#e82c2c" stroke-width="1" fill="none"/><path d="M198.5 336.5V345.5H189.5" stroke="#f06868" stroke-width="1" fill="none"/><circle cx="194.15" cy="364.45" r="11.7" stroke="#3c3c3c" stroke-width="1.0" fill="none"/><path d="M189.5 369.0V359.5H199.0" stroke="#e82c2c" stroke-width="1" fill="none"/><path d="M198.5 359.5V368.5H189.5" stroke="#f06868" stroke-width="1" fill="none"/><circle cx="194.15" cy="388.30" r="11.7" stroke="#3c3c3c" stroke-width="1.0" fill="none"/><path d="M189.5 393.0V383.5H199.0" stroke="#e82c2c" stroke-width="1" fill="none"/><path d="M198.5 383.5V392.5H189.5" stroke="#f06868" stroke-width="1" fill="none"/><rect x="219.50" y="305.50" width="9.20" height="90.80" stroke="#585858" stroke-width="1" fill="none"/><rect x="258.40" y="305.50" width="9.10" height="90.80" stroke="#585858" stroke-width="1" fill="none"/><circle cx="244.10" cy="316.75" r="11.7" stroke="#3c3c3c" stroke-width="1.0" fill="none"/><path d="M239.5 322.0V312.5H249.0" stroke="#e82c2c" stroke-width="1" fill="none"/><path d="M248.5 312.5V321.5H239.5" stroke="#f06868" stroke-width="1" fill="none"/><circle cx="244.10" cy="340.60" r="11.7" stroke="#3c3c3c" stroke-width="1.0" fill="none"/><path d="M239.5 346.0V336.5H249.0" stroke="#e82c2c" stroke-width="1" fill="none"/><path d="M248.5 336.5V345.5H239.5" stroke="#f06868" stroke-width="1" fill="none"/><circle cx="244.10" cy="364.45" r="11.7" stroke="#3c3c3c" stroke-width="1.0" fill="none"/><path d="M239.5 369.0V359.5H249.0" stroke="#e82c2c" stroke-width="1" fill="none"/><path d="M248.5 359.5V368.5H239.5" stroke="#f06868" stroke-width="1" fill="none"/><circle cx="244.10" cy="388.30" r="11.7" stroke="#3c3c3c" stroke-width="1.0" fill="none"/><path d="M239.5 393.0V383.5H249.0" stroke="#e82c2c" stroke-width="1" fill="none"/><path d="M248.5 383.5V392.5H239.5" stroke="#f06868" stroke-width="1" fill="none"/><rect x="269.45" y="305.50" width="9.20" height="90.80" stroke="#585858" stroke-width="1" fill="none"/><rect x="308.35" y="305.50" width="9.10" height="90.80" stroke="#585858" stroke-width="1" fill="none"/><circle cx="294.05" cy="316.75" r="11.7" stroke="#3c3c3c" stroke-width="1.0" fill="none"/><path d="M289.5 322.0V312.5H299.0" stroke="#e82c2c" stroke-width="1" fill="none"/><path d="M298.5 312.5V321.5H289.5" stroke="#f06868" stroke-width="1" fill="none"/><circle cx="294.05" cy="340.60" r="11.7" stroke="#3c3c3c" stroke-width="1.0" fill="none"/><path d="M289.5 346.0V336.5H299.0" stroke="#e82c2c" stroke-width="1" fill="none"/><path d="M298.5 336.5V345.5H289.5" stroke="#f06868" stroke-width="1" fill="none"/><circle cx="294.05" cy="364.45" r="11.7" stroke="#3c3c3c" stroke-width="1.0" fill="none"/><path d="M289.5 369.0V359.5H299.0" stroke="#e82c2c" stroke-width="1" fill="none"/><path d="M298.5 359.5V368.5H289.5" stroke="#f06868" stroke-width="1" fill="none"/><circle cx="294.05" cy="388.30" r="11.7" stroke="#3c3c3c" stroke-width="1.0" fill="none"/><path d="M289.5 393.0V383.5H299.0" stroke="#e82c2c" stroke-width="1" fill="none"/><path d="M298.5 383.5V392.5H289.5" stroke="#f06868" stroke-width="1" fill="none"/><rect x="319.40" y="305.50" width="9.20" height="90.80" stroke="#585858" stroke-width="1" fill="none"/><rect x="358.30" y="305.50" width="9.10" height="90.80" stroke="#585858" stroke-width="1" fill="none"/><circle cx="344.00" cy="316.75" r="11.7" stroke="#3c3c3c" stroke-width="1.0" fill="none"/><path d="M339.5 322.0V312.5H349.0" stroke="#e82c2c" stroke-width="1" fill="none"/><path d="M348.5 312.5V321.5H339.5" stroke="#f06868" stroke-width="1" fill="none"/><circle cx="344.00" cy="340.60" r="11.7" stroke="#3c3c3c" stroke-width="1.0" fill="none"/><path d="M339.5 346.0V336.5H349.0" stroke="#e82c2c" stroke-width="1" fill="none"/><path d="M348.5 336.5V345.5H339.5" stroke="#f06868" stroke-width="1" fill="none"/><circle cx="344.00" cy="364.45" r="11.7" stroke="#3c3c3c" stroke-width="1.0" fill="none"/><path d="M339.5 369.0V359.5H349.0" stroke="#e82c2c" stroke-width="1" fill="none"/><path d="M348.5 359.5V368.5H339.5" stroke="#f06868" stroke-width="1" fill="none"/><circle cx="344.00" cy="388.30" r="11.7" stroke="#3c3c3c" stroke-width="1.0" fill="none"/><path d="M339.5 393.0V383.5H349.0" stroke="#e82c2c" stroke-width="1" fill="none"/><path d="M348.5 383.5V392.5H339.5" stroke="#f06868" stroke-width="1" fill="none"/><rect x="369.35" y="305.50" width="9.20" height="90.80" stroke="#585858" stroke-width="1" fill="none"/><rect x="408.25" y="305.50" width="9.10" height="90.80" stroke="#585858" stroke-width="1" fill="none"/><circle cx="393.95" cy="316.75" r="11.7" stroke="#3c3c3c" stroke-width="1.0" fill="none"/><path d="M389.5 322.0V312.5H399.0" stroke="#e82c2c" stroke-width="1" fill="none"/><path d="M398.5 312.5V321.5H389.5" stroke="#f06868" stroke-width="1" fill="none"/><circle cx="393.95" cy="340.60" r="11.7" stroke="#3c3c3c" stroke-width="1.0" fill="none"/><path d="M389.5 346.0V336.5H399.0" stroke="#e82c2c" stroke-width="1" fill="none"/><path d="M398.5 336.5V345.5H389.5" stroke="#f06868" stroke-width="1" fill="none"/><circle cx="393.95" cy="364.45" r="11.7" stroke="#3c3c3c" stroke-width="1.0" fill="none"/><path d="M389.5 369.0V359.5H399.0" stroke="#e82c2c" stroke-width="1" fill="none"/><path d="M398.5 359.5V368.5H389.5" stroke="#f06868" stroke-width="1" fill="none"/><circle cx="393.95" cy="388.30" r="11.7" stroke="#3c3c3c" stroke-width="1.0" fill="none"/><path d="M389.5 393.0V383.5H399.0" stroke="#e82c2c" stroke-width="1" fill="none"/><path d="M398.5 383.5V392.5H389.5" stroke="#f06868" stroke-width="1" fill="none"/><rect x="419.30" y="305.50" width="9.20" height="90.80" stroke="#585858" stroke-width="1" fill="none"/><rect x="458.20" y="305.50" width="9.10" height="90.80" stroke="#585858" stroke-width="1" fill="none"/><circle cx="443.90" cy="316.75" r="11.7" stroke="#3c3c3c" stroke-width="1.0" fill="none"/><path d="M439.5 322.0V312.5H449.0" stroke="#e82c2c" stroke-width="1" fill="none"/><path d="M448.5 312.5V321.5H439.5" stroke="#f06868" stroke-width="1" fill="none"/><circle cx="443.90" cy="340.60" r="11.7" stroke="#3c3c3c" stroke-width="1.0" fill="none"/><path d="M439.5 346.0V336.5H449.0" stroke="#e82c2c" stroke-width="1" fill="none"/><path d="M448.5 336.5V345.5H439.5" stroke="#f06868" stroke-width="1" fill="none"/><circle cx="443.90" cy="364.45" r="11.7" stroke="#3c3c3c" stroke-width="1.0" fill="none"/><path d="M439.5 369.0V359.5H449.0" stroke="#e82c2c" stroke-width="1" fill="none"/><path d="M448.5 359.5V368.5H439.5" stroke="#f06868" stroke-width="1" fill="none"/><circle cx="443.90" cy="388.30" r="11.7" stroke="#3c3c3c" stroke-width="1.0" fill="none"/><path d="M439.5 393.0V383.5H449.0" stroke="#e82c2c" stroke-width="1" fill="none"/><path d="M448.5 383.5V392.5H439.5" stroke="#f06868" stroke-width="1" fill="none"/><rect x="469.25" y="305.50" width="9.20" height="90.80" stroke="#585858" stroke-width="1" fill="none"/><rect x="508.15" y="305.50" width="9.10" height="90.80" stroke="#585858" stroke-width="1" fill="none"/><circle cx="493.85" cy="316.75" r="11.7" stroke="#3c3c3c" stroke-width="1.0" fill="none"/><path d="M489.5 322.0V312.5H499.0" stroke="#e82c2c" stroke-width="1" fill="none"/><path d="M498.5 312.5V321.5H489.5" stroke="#f06868" stroke-width="1" fill="none"/><circle cx="493.85" cy="340.60" r="11.7" stroke="#3c3c3c" stroke-width="1.0" fill="none"/><path d="M489.5 346.0V336.5H499.0" stroke="#e82c2c" stroke-width="1" fill="none"/><path d="M498.5 336.5V345.5H489.5" stroke="#f06868" stroke-width="1" fill="none"/><circle cx="493.85" cy="364.45" r="11.7" stroke="#3c3c3c" stroke-width="1.0" fill="none"/><path d="M489.5 369.0V359.5H499.0" stroke="#e82c2c" stroke-width="1" fill="none"/><path d="M498.5 359.5V368.5H489.5" stroke="#f06868" stroke-width="1" fill="none"/><circle cx="493.85" cy="388.30" r="11.7" stroke="#3c3c3c" stroke-width="1.0" fill="none"/><path d="M489.5 393.0V383.5H499.0" stroke="#e82c2c" stroke-width="1" fill="none"/><path d="M498.5 383.5V392.5H489.5" stroke="#f06868" stroke-width="1" fill="none"/><rect x="119.30" y="400.80" width="91.20" height="9.00" stroke="#585858" stroke-width="1" fill="none"/><rect x="119.30" y="439.40" width="91.20" height="9.00" stroke="#585858" stroke-width="1" fill="none"/><rect x="215.10" y="400.80" width="91.20" height="9.00" stroke="#585858" stroke-width="1" fill="none"/><rect x="215.10" y="439.40" width="91.20" height="9.00" stroke="#585858" stroke-width="1" fill="none"/><rect x="311.60" y="400.80" width="91.20" height="9.00" stroke="#585858" stroke-width="1" fill="none"/><rect x="311.60" y="439.40" width="91.20" height="9.00" stroke="#585858" stroke-width="1" fill="none"/><rect x="408.40" y="400.80" width="91.20" height="9.00" stroke="#585858" stroke-width="1" fill="none"/><rect x="408.40" y="439.40" width="91.20" height="9.00" stroke="#585858" stroke-width="1" fill="none"/><circle cx="130.65" cy="424.35" r="11.7" stroke="#3c3c3c" stroke-width="1.0" fill="none"/><path d="M126.5 429.0V419.5H136.0" stroke="#e82c2c" stroke-width="1" fill="none"/><path d="M135.5 419.5V428.5H126.5" stroke="#f06868" stroke-width="1" fill="none"/><circle cx="154.75" cy="424.35" r="11.7" stroke="#3c3c3c" stroke-width="1.0" fill="none"/><path d="M150.5 429.0V419.5H160.0" stroke="#e82c2c" stroke-width="1" fill="none"/><path d="M159.5 419.5V428.5H150.5" stroke="#f06868" stroke-width="1" fill="none"/><circle cx="178.85" cy="424.35" r="11.7" stroke="#3c3c3c" stroke-width="1.0" fill="none"/><path d="M174.5 429.0V419.5H184.0" stroke="#e82c2c" stroke-width="1" fill="none"/><path d="M183.5 419.5V428.5H174.5" stroke="#f06868" stroke-width="1" fill="none"/><circle cx="202.95" cy="424.35" r="11.7" stroke="#3c3c3c" stroke-width="1.0" fill="none"/><path d="M198.5 429.0V419.5H208.0" stroke="#e82c2c" stroke-width="1" fill="none"/><path d="M207.5 419.5V428.5H198.5" stroke="#f06868" stroke-width="1" fill="none"/><circle cx="227.05" cy="424.35" r="11.7" stroke="#3c3c3c" stroke-width="1.0" fill="none"/><path d="M222.5 429.0V419.5H232.0" stroke="#e82c2c" stroke-width="1" fill="none"/><path d="M231.5 419.5V428.5H222.5" stroke="#f06868" stroke-width="1" fill="none"/><circle cx="251.15" cy="424.35" r="11.7" stroke="#3c3c3c" stroke-width="1.0" fill="none"/><path d="M246.5 429.0V419.5H256.0" stroke="#e82c2c" stroke-width="1" fill="none"/><path d="M255.5 419.5V428.5H246.5" stroke="#f06868" stroke-width="1" fill="none"/><circle cx="275.25" cy="424.35" r="11.7" stroke="#3c3c3c" stroke-width="1.0" fill="none"/><path d="M270.5 429.0V419.5H280.0" stroke="#e82c2c" stroke-width="1" fill="none"/><path d="M279.5 419.5V428.5H270.5" stroke="#f06868" stroke-width="1" fill="none"/><circle cx="299.35" cy="424.35" r="11.7" stroke="#3c3c3c" stroke-width="1.0" fill="none"/><path d="M294.5 429.0V419.5H304.0" stroke="#e82c2c" stroke-width="1" fill="none"/><path d="M303.5 419.5V428.5H294.5" stroke="#f06868" stroke-width="1" fill="none"/><circle cx="323.45" cy="424.35" r="11.7" stroke="#3c3c3c" stroke-width="1.0" fill="none"/><path d="M318.5 429.0V419.5H328.0" stroke="#e82c2c" stroke-width="1" fill="none"/><path d="M327.5 419.5V428.5H318.5" stroke="#f06868" stroke-width="1" fill="none"/><circle cx="347.55" cy="424.35" r="11.7" stroke="#3c3c3c" stroke-width="1.0" fill="none"/><path d="M343.5 429.0V419.5H353.0" stroke="#e82c2c" stroke-width="1" fill="none"/><path d="M352.5 419.5V428.5H343.5" stroke="#f06868" stroke-width="1" fill="none"/><circle cx="371.65" cy="424.35" r="11.7" stroke="#3c3c3c" stroke-width="1.0" fill="none"/><path d="M367.5 429.0V419.5H377.0" stroke="#e82c2c" stroke-width="1" fill="none"/><path d="M376.5 419.5V428.5H367.5" stroke="#f06868" stroke-width="1" fill="none"/><circle cx="395.75" cy="424.35" r="11.7" stroke="#3c3c3c" stroke-width="1.0" fill="none"/><path d="M391.5 429.0V419.5H401.0" stroke="#e82c2c" stroke-width="1" fill="none"/><path d="M400.5 419.5V428.5H391.5" stroke="#f06868" stroke-width="1" fill="none"/><circle cx="419.85" cy="424.35" r="11.7" stroke="#3c3c3c" stroke-width="1.0" fill="none"/><path d="M415.5 429.0V419.5H425.0" stroke="#e82c2c" stroke-width="1" fill="none"/><path d="M424.5 419.5V428.5H415.5" stroke="#f06868" stroke-width="1" fill="none"/><circle cx="443.95" cy="424.35" r="11.7" stroke="#3c3c3c" stroke-width="1.0" fill="none"/><path d="M439.5 429.0V419.5H449.0" stroke="#e82c2c" stroke-width="1" fill="none"/><path d="M448.5 419.5V428.5H439.5" stroke="#f06868" stroke-width="1" fill="none"/><circle cx="468.05" cy="424.35" r="11.7" stroke="#3c3c3c" stroke-width="1.0" fill="none"/><path d="M463.5 429.0V419.5H473.0" stroke="#e82c2c" stroke-width="1" fill="none"/><path d="M472.5 419.5V428.5H463.5" stroke="#f06868" stroke-width="1" fill="none"/><circle cx="492.15" cy="424.35" r="11.7" stroke="#3c3c3c" stroke-width="1.0" fill="none"/><path d="M487.5 429.0V419.5H497.0" stroke="#e82c2c" stroke-width="1" fill="none"/><path d="M496.5 419.5V428.5H487.5" stroke="#f06868" stroke-width="1" fill="none"/><rect x="118.70" y="450.50" width="90.90" height="9.10" stroke="#585858" stroke-width="1" fill="none"/><rect x="118.30" y="461.50" width="90.60" height="8.90" stroke="#585858" stroke-width="1" fill="none"/><rect x="118.30" y="472.60" width="91.10" height="8.70" stroke="#585858" stroke-width="1" fill="none"/><circle cx="222.85" cy="464.05" r="11.7" stroke="#3c3c3c" stroke-width="1.0" fill="none"/><path d="M218.5 469.0V459.5H228.0" stroke="#e82c2c" stroke-width="1" fill="none"/><path d="M227.5 459.5V468.5H218.5" stroke="#f06868" stroke-width="1" fill="none"/><circle cx="246.65" cy="464.05" r="11.7" stroke="#3c3c3c" stroke-width="1.0" fill="none"/><path d="M242.5 469.0V459.5H252.0" stroke="#e82c2c" stroke-width="1" fill="none"/><path d="M251.5 459.5V468.5H242.5" stroke="#f06868" stroke-width="1" fill="none"/><circle cx="270.45" cy="464.05" r="11.7" stroke="#3c3c3c" stroke-width="1.0" fill="none"/><path d="M265.5 469.0V459.5H275.0" stroke="#e82c2c" stroke-width="1" fill="none"/><path d="M274.5 459.5V468.5H265.5" stroke="#f06868" stroke-width="1" fill="none"/><circle cx="294.25" cy="464.05" r="11.7" stroke="#3c3c3c" stroke-width="1.0" fill="none"/><path d="M289.5 469.0V459.5H299.0" stroke="#e82c2c" stroke-width="1" fill="none"/><path d="M298.5 459.5V468.5H289.5" stroke="#f06868" stroke-width="1" fill="none"/><circle cx="319.95" cy="464.05" r="11.7" stroke="#3c3c3c" stroke-width="1.0" fill="none"/><path d="M315.5 469.0V459.5H325.0" stroke="#e82c2c" stroke-width="1" fill="none"/><path d="M324.5 459.5V468.5H315.5" stroke="#f06868" stroke-width="1" fill="none"/><circle cx="343.75" cy="464.05" r="11.7" stroke="#3c3c3c" stroke-width="1.0" fill="none"/><path d="M339.5 469.0V459.5H349.0" stroke="#e82c2c" stroke-width="1" fill="none"/><path d="M348.5 459.5V468.5H339.5" stroke="#f06868" stroke-width="1" fill="none"/><circle cx="367.55" cy="464.05" r="11.7" stroke="#3c3c3c" stroke-width="1.0" fill="none"/><path d="M363.5 469.0V459.5H373.0" stroke="#e82c2c" stroke-width="1" fill="none"/><path d="M372.5 459.5V468.5H363.5" stroke="#f06868" stroke-width="1" fill="none"/><circle cx="391.35" cy="464.05" r="11.7" stroke="#3c3c3c" stroke-width="1.0" fill="none"/><path d="M386.5 469.0V459.5H396.0" stroke="#e82c2c" stroke-width="1" fill="none"/><path d="M395.5 459.5V468.5H386.5" stroke="#f06868" stroke-width="1" fill="none"/><circle cx="417.35" cy="461.75" r="11.7" stroke="#3c3c3c" stroke-width="1.0" fill="none"/><path d="M412.5 467.0V457.5H422.0" stroke="#e82c2c" stroke-width="1" fill="none"/><path d="M421.5 457.5V466.5H412.5" stroke="#f06868" stroke-width="1" fill="none"/><circle cx="441.15" cy="461.75" r="11.7" stroke="#3c3c3c" stroke-width="1.0" fill="none"/><path d="M436.5 467.0V457.5H446.0" stroke="#e82c2c" stroke-width="1" fill="none"/><path d="M445.5 457.5V466.5H436.5" stroke="#f06868" stroke-width="1" fill="none"/><circle cx="464.95" cy="461.75" r="11.7" stroke="#3c3c3c" stroke-width="1.0" fill="none"/><path d="M460.5 467.0V457.5H470.0" stroke="#e82c2c" stroke-width="1" fill="none"/><path d="M469.5 457.5V466.5H460.5" stroke="#f06868" stroke-width="1" fill="none"/><circle cx="488.75" cy="461.75" r="11.7" stroke="#3c3c3c" stroke-width="1.0" fill="none"/><path d="M484.5 467.0V457.5H494.0" stroke="#e82c2c" stroke-width="1" fill="none"/><path d="M493.5 457.5V466.5H484.5" stroke="#f06868" stroke-width="1" fill="none"/><rect x="210.20" y="476.20" width="91.30" height="9.10" stroke="#585858" stroke-width="1" fill="none"/><rect x="307.40" y="476.20" width="91.40" height="9.10" stroke="#585858" stroke-width="1" fill="none"/><rect x="408.50" y="474.10" width="90.80" height="9.00" stroke="#585858" stroke-width="1" fill="none"/></svg>
<svg style="left:652px;top:98px" width="16" height="459" shape-rendering="crispEdges"><defs><pattern id="ck652_98" width="2" height="2" patternUnits="userSpaceOnUse"><rect width="2" height="2" fill="#e0ddd7"/><rect width="1" height="1" fill="#fff"/><rect x="1" y="1" width="1" height="1" fill="#fff"/></pattern></defs><rect width="16" height="459" fill="url(#ck652_98)"/></svg>
<div class="a" style="left:652px;top:82px;width:16px;height:16px;background:#d4d0c8;border-top:1px solid #fff;border-left:1px solid #fff;border-right:1px solid #808080;border-bottom:1px solid #808080"></div>
<svg style="left:656px;top:87px" width="8" height="5"><path d="M0 5H8L4.0 0Z" fill="#000"/></svg>
<div class="a" style="left:652px;top:557px;width:16px;height:16px;background:#d4d0c8;border-top:1px solid #fff;border-left:1px solid #fff;border-right:1px solid #808080;border-bottom:1px solid #808080"></div>
<svg style="left:656px;top:563px" width="8" height="5"><path d="M0 0H8L4.0 5Z" fill="#000"/></svg>
<div class="a" style="left:652px;top:213px;width:16px;height:264px;background:#d4d0c8;border-top:1px solid #d4d0c8;border-left:1px solid #d4d0c8;border-right:1px solid #404040;border-bottom:1px solid #404040"></div>
<div class="a" style="left:653px;top:214px;width:1px;height:261px;background:#fff"></div>
<div class="a" style="left:653px;top:214px;width:13px;height:1px;background:#f6f5f2"></div>
<div class="a" style="left:653px;top:475px;width:14px;height:1px;background:#808080"></div>
<div class="a" style="left:668px;top:61px;width:2px;height:545px;background:#d4d0c8"></div>
<div class="a" style="left:0px;top:572px;width:652px;height:18px;background:#d4d0c8"></div>
<div class="a" style="left:0px;top:572px;width:164px;height:1px;background:#a09c94"></div>
<div class="a" style="left:0px;top:589px;width:652px;height:1px;background:#f4f3f0"></div>
<div class="a" style="left:158px;top:574px;width:1px;height:12px;background:#fff"></div>
<div class="a" style="left:159px;top:574px;width:1px;height:12px;background:#a09c94"></div>
<div class="a" style="left:161px;top:574px;width:1px;height:12px;background:#fff"></div>
<div class="a" style="left:162px;top:574px;width:1px;height:12px;background:#a09c94"></div>
<div class="a" style="left:164px;top:572px;width:17px;height:17px;background:#d4d0c8;border-top:1px solid #fff;border-left:1px solid #fff;border-right:1px solid #606060;border-bottom:1px solid #808080"></div>
<div class="a" style="left:164px;top:572px;width:1px;height:17px;background:#606060"></div>
<svg style="left:169px;top:576px" width="5" height="8"><path d="M5 0V8L0 4Z" fill="#000"/></svg>
<svg style="left:181px;top:573px" width="2" height="16" shape-rendering="crispEdges"><defs><pattern id="ck181_573" width="2" height="2" patternUnits="userSpaceOnUse"><rect width="2" height="2" fill="#e0ddd7"/><rect width="1" height="1" fill="#fff"/><rect x="1" y="1" width="1" height="1" fill="#fff"/></pattern></defs><rect width="2" height="16" fill="url(#ck181_573)"/></svg>
<div class="a" style="left:182px;top:573px;width:443px;height:15px;background:#d4d0c8;border-top:1px solid #fff;border-left:1px solid #fff;border-right:1px solid #404040;border-bottom:1px solid #404040"></div>
<div class="a" style="left:183px;top:586px;width:441px;height:1px;background:#808080"></div>
<div class="a" style="left:623px;top:574px;width:1px;height:13px;background:#808080"></div>
<svg style="left:625px;top:573px" width="12" height="16" shape-rendering="crispEdges"><defs><pattern id="ck625_573" width="2" height="2" patternUnits="userSpaceOnUse"><rect width="2" height="2" fill="#e0ddd7"/><rect width="1" height="1" fill="#fff"/><rect x="1" y="1" width="1" height="1" fill="#fff"/></pattern></defs><rect width="12" height="16" fill="url(#ck625_573)"/></svg>
<div class="a" style="left:637px;top:572px;width:15px;height:17px;background:#d4d0c8;border-top:1px solid #fff;border-left:1px solid #fff;border-right:1px solid #808080;border-bottom:1px solid #808080"></div>
<svg style="left:642px;top:576.5px" width="5" height="7.5"><path d="M0 0V7.5L5 3.75Z" fill="#000"/></svg>
<svg style="left:654px;top:575px" width="11" height="11"><circle cx="4.6" cy="4.4" r="3.6" fill="#f2f2fa" stroke="#50508a" stroke-width="1"/><circle cx="4.6" cy="4.4" r="1.5" fill="none" stroke="#7070a0" stroke-width="0.8"/><path d="M7.3 7.1L10.3 10" stroke="#40407a" stroke-width="1.3"/></svg>
<div class="a" style="left:0px;top:590px;width:670px;height:1px;background:#b4b0a8"></div>
<div class="a" style="left:0px;top:591px;width:657px;height:14px;background:#fff"></div>
<div class="a" style="left:670px;top:61px;width:1px;height:544px;background:#a8a49c"></div>
<div class="a" style="left:671px;top:61px;width:58px;height:18px;background:#bfbbb3"></div>
<div class="t" style="left:676.5px;top:66px;font-size:10px;letter-spacing:0.05px">Преобразов</div>
<svg style="left:0px;top:0px" width="1" height="1"><path d="M713 90L715.2 92.4H714.4V94.6H716.6V93.8L719 96 716.6 98.2V97.4H714.4V99.6H715.2L713 102 710.8 99.6H711.6V97.4H709.4V98.2L707 96 709.4 93.8V94.6H711.6V92.4H710.8Z" fill="#fff" stroke="#50507a" stroke-width="0.9"/></svg>
<div class="a" style="left:725px;top:87px;width:10px;height:19px;background:#fff;border-top:1px solid #404040;border-left:1px solid #404040"></div>
<div class="a" style="left:679px;top:113px;width:50px;height:1px;background:#a8a49c"></div>
<div class="a" style="left:679px;top:114px;width:50px;height:1px;background:#fff"></div>
<svg style="left:0px;top:0px" width="1" height="1"><path d="M708.5 130.5A4 4 0 1 1 707 135.5" fill="none" stroke="#c4c0b8" stroke-width="1.3"/><path d="M705.5 129.5L709.5 129 708.5 133Z" fill="#c4c0b8"/></svg>
<div class="a" style="left:717px;top:122px;width:14px;height:23px;background:#d4d0c8;border-top:1px solid #808080;border-left:1px solid #808080;border-bottom:1px solid #fff"></div>
<div class="t" style="left:719px;top:127.5px;font-size:11px;color:#8c8a84">90</div>
<div class="t" style="left:679.2px;top:155.5px;font-size:10px;letter-spacing:0.1px">По центру</div>
<div class="a" style="left:717px;top:172px;width:14px;height:23px;background:#d4d0c8;border-top:1px solid #808080;border-left:1px solid #808080;border-bottom:1px solid #fff"></div>
<div class="t" style="left:719px;top:177.5px;font-size:11px;color:#8c8a84">90</div>
<div class="t" style="left:706px;top:178px;font-size:11px;color:#bcb8b0">x:</div>
<div class="a" style="left:717px;top:197px;width:14px;height:23px;background:#d4d0c8;border-top:1px solid #808080;border-left:1px solid #808080;border-bottom:1px solid #fff"></div>
<div class="t" style="left:719px;top:202.5px;font-size:11px;color:#8c8a84">82</div>
<div class="t" style="left:706px;top:203px;font-size:11px;color:#bcb8b0">y:</div>
<div class="a" style="left:717px;top:225px;width:12px;height:13px;border-top:2px solid #404040;border-left:1px solid #808080;border-bottom:2px solid #fff;border-right:2px solid #fff"></div>
<div class="a" style="left:720px;top:246px;width:5px;height:5px;background:#e8e6e1;border:1px solid #e0ded9"></div>
<div class="a" style="left:720px;top:258px;width:5px;height:5px;background:#e8e6e1;border:1px solid #e0ded9"></div>
<div class="a" style="left:720px;top:270px;width:5px;height:5px;background:#e8e6e1;border:1px solid #e0ded9"></div>
<div class="a" style="left:722px;top:251px;width:1px;height:20px;background:#dddbd5"></div>
<div class="a" style="left:679px;top:289px;width:50px;height:1px;background:#a8a49c"></div>
<div class="a" style="left:679px;top:290px;width:50px;height:1px;background:#fff"></div>
<div class="t" style="left:681.5px;top:299.5px;font-size:10.5px;letter-spacing:0.2px;-webkit-text-stroke:0.12px #000">Копии:</div>
<div class="a" style="left:717px;top:293px;width:14px;height:23px;background:#d4d0c8;border-top:1px solid #808080;border-left:1px solid #808080;border-bottom:1px solid #fff"></div>
<div class="t" style="left:719px;top:298.5px;font-size:11px;color:#8c8a84">0</div>
<div class="a" style="left:679px;top:323px;width:50px;height:1px;background:#a8a49c"></div>
<div class="a" style="left:679px;top:324px;width:50px;height:1px;background:#fff"></div>
<div class="a" style="left:0px;top:605px;width:670px;height:1px;background:#c4c0b8"></div>
<div class="t" style="left:-1px;top:627px;font-size:11px;letter-spacing:-0.2px">ECI);</div>
<div class="t" style="left:25.5px;top:627px;font-size:10.5px;letter-spacing:-0.15px">Оттенки серого: Dot Gain 15%</div>
<svg style="left:171px;top:628px" width="5" height="8"><path d="M0 0V8L5 4Z" fill="#000"/></svg>
<svg style="left:0px;top:0px" width="1" height="1"><rect x="644.5" y="609.5" width="11" height="9" fill="#c8d0f0" stroke="#7c84b4"/><rect x="645.5" y="610.5" width="9" height="2.3" fill="#e0a0a0"/><rect x="645.5" y="612.8" width="9" height="2" fill="#68b068"/><rect x="645.5" y="614.8" width="9" height="2.7" fill="#a8c0ee"/><circle cx="650" cy="614" r="1.9" fill="#f4f4f8" stroke="#505072" stroke-width="1.1"/><path d="M649.6 613.1V614.9L651 614Z" fill="#606080"/><path d="M646.5 620.5H653" stroke="#7c84b4" stroke-width="1.2"/></svg>
<div class="a" style="left:700px;top:609px;width:1px;height:10px;background:#fff"></div>
<svg style="left:0px;top:0px" width="1" height="1"><path d="M702.8 616L707.6 609.8 713 615.6 707.3 621Z" fill="#fff" stroke="#34345a" stroke-width="1.2" stroke-linejoin="round"/><path d="M703.8 616.2H712L707.3 620.2Z" fill="#f08a10"/><path d="M713 615.2Q714.8 616 714.8 619.5" stroke="#f08a10" stroke-width="1.3" fill="none"/><path d="M707.6 609.5L709 611" stroke="#34345a"/></svg>
<svg style="left:0px;top:0px" width="1" height="1"><rect x="719.5" y="608.5" width="14" height="13" fill="#fff" stroke="#505050"/><path d="M720 609L733 621M720 621L733 609" stroke="#000" stroke-width="1" fill="none"/></svg>
<svg style="left:0px;top:0px" width="1" height="1"><path d="M709 626.3Q712.3 630.5 711.8 635.5H706.2Q705.7 630.5 709 626.3Z" fill="#fff" stroke="#50507a" stroke-width="1.1"/><circle cx="709" cy="632" r="0.9" fill="#50507a"/><path d="M705.8 637.3H712.2" stroke="#000" stroke-width="1.4"/></svg>
<div class="a" style="left:719px;top:625px;width:10px;height:14px;background:#1a1a1a;border-top:1px solid #303030"></div>
<div class="a" style="left:0px;top:642px;width:689px;height:1px;background:#fff"></div>
<div class="a" style="left:689px;top:642px;width:40px;height:1px;background:#a8a49c"></div>
</body></html>
